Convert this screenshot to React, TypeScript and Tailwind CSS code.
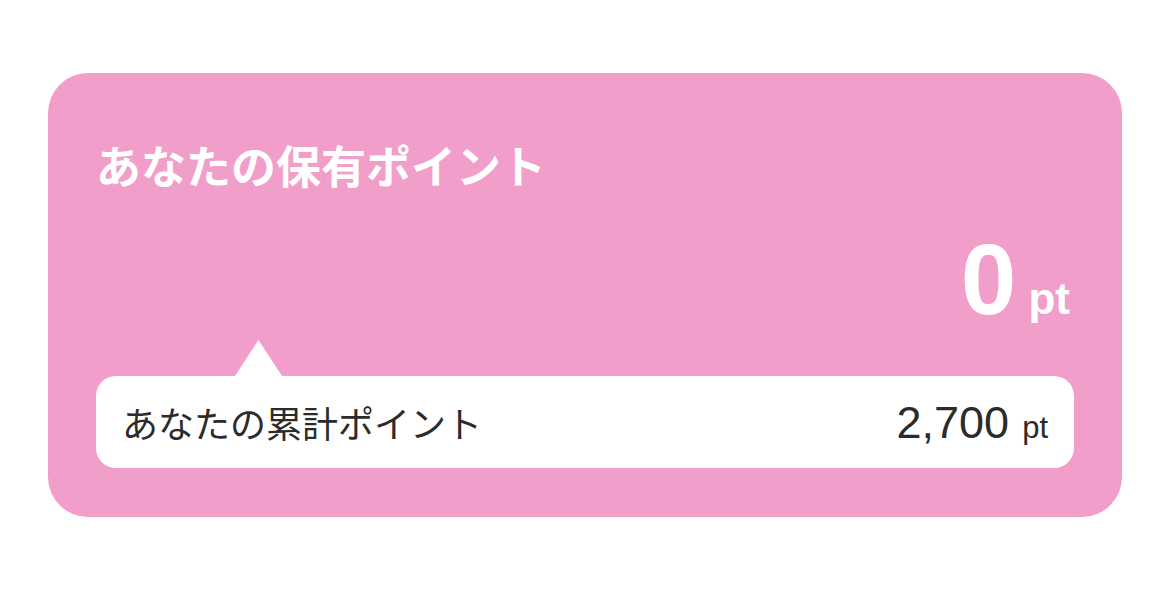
export default function App() {
  const jp = { fontFamily: '"Noto Sans CJK JP", "Noto Sans", sans-serif' };
  const num = { fontFamily: '"Liberation Sans", Arial, sans-serif' };
  return (
    <div className="w-[1170px] h-[593px] bg-white pt-[73px] pl-[48px]">
      <div className="w-[1074px] rounded-[40px] bg-[#f19ecb] px-[48px] pt-[69px] pb-[49px] flex flex-col">
        <h2 className="text-[45px] leading-[45px] font-bold text-white" style={jp}>
          あなたの保有ポイント
        </h2>
        <div className="mt-[42px] mr-[4px] flex items-baseline justify-end text-white font-bold" style={num}>
          <span className="text-[100px] leading-[100px]">0</span>
          <span className="ml-[12px] text-[44px] leading-[44px]">pt</span>
        </div>
        <svg className="mt-[11px] ml-[139px] block" width="47" height="36" viewBox="0 0 47 36">
          <polygon points="0,36 23.5,0 47,36" fill="#ffffff" />
        </svg>
        <div className="h-[92px] rounded-[20px] bg-white px-[26px] flex items-center justify-between text-[#2b2b2b]">
          <span className="text-[36px] leading-[36px]" style={jp}>
            あなたの累計ポイント
          </span>
          <span className="flex items-baseline" style={num}>
            <span className="text-[45px] leading-[45px]">2,700</span>
            <span className="ml-[13px] text-[31px] leading-[31px]">pt</span>
          </span>
        </div>
      </div>
    </div>
  );
}
